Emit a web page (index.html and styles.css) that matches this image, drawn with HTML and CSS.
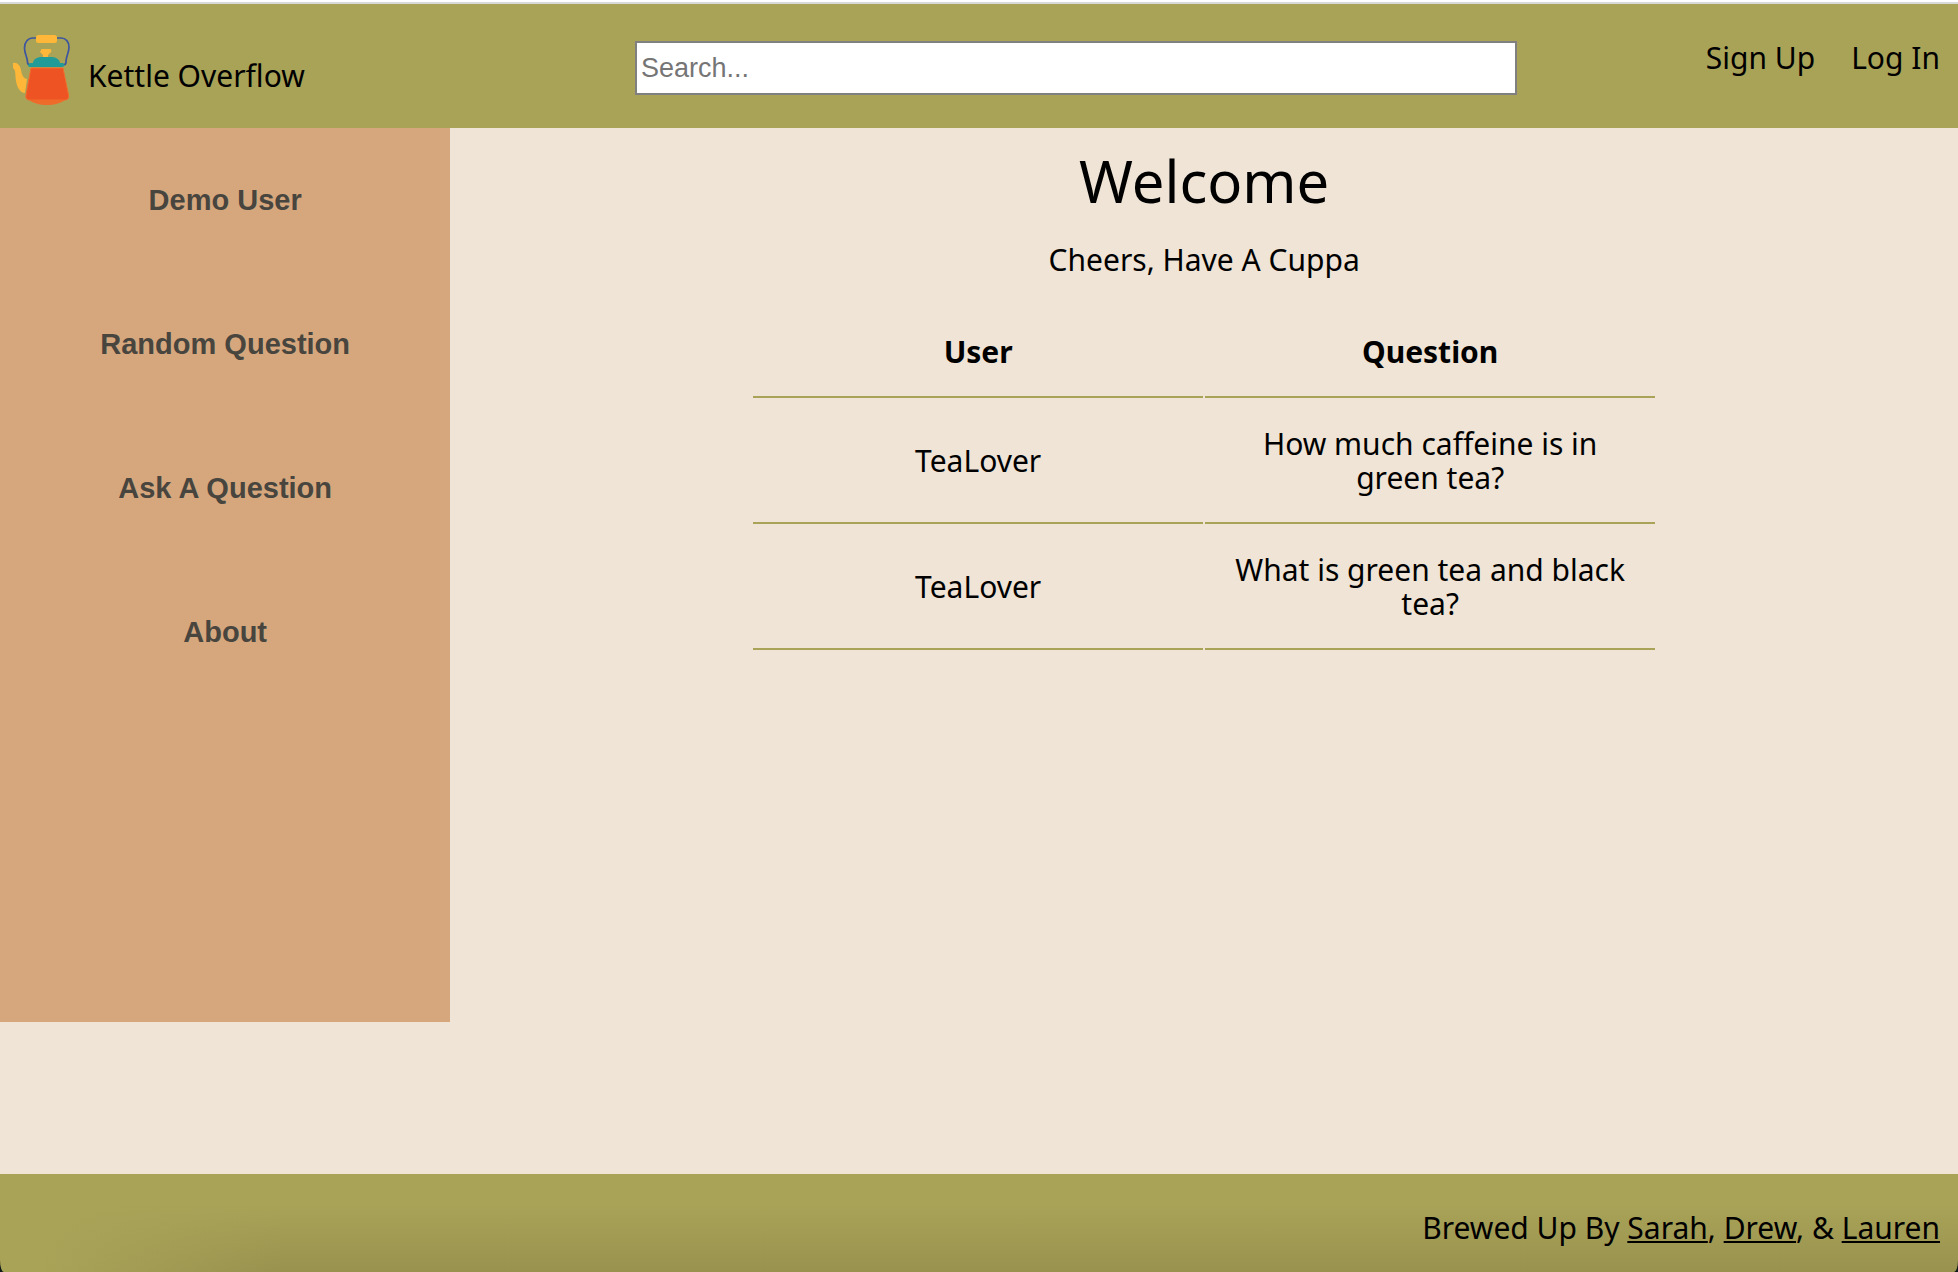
FILE: index.html
```html
<!DOCTYPE html>
<html lang="en">
<head>
  <meta charset="utf-8">
  <meta name="viewport" content="width=device-width, initial-scale=1">
  <title>Kettle Overflow</title>
  <link rel="stylesheet" href="styles.css">
</head>
<body>
  <header class="header">
    <a class="brand" href="#">
      <svg class="brand-logo" viewBox="0 0 60 72" aria-hidden="true">
        <path d="M26 4h-5C16 4 12.500 8 12.500 14c0 6 3 9 3 14q0 3 3 3M45 4h4c5 0 8 4 8 9 0 6-3 9-3 15q0 3-3 3" fill="none" stroke="#3d569f" stroke-width="1.700"/>
        <rect x="24" y="1" width="21" height="8" rx="2.500" fill="#feb738"/>
        <path d="M29 16q0-1 1-1h8q2 0 1 3l-3 3v3h-5v-3l-3-3z" fill="#feb738"/>
        <path d="M21 29c0-4 5-6 8-6h11c4 0 8 3 8 6h3c2 1 2 4-1 4H18c-3 0-2-4 1-4z" fill="#209b98"/>
        <path d="M1 29c4-1 7 2 8 7 1 5 2 8 6 9l-2 14C8 59 5 53 4 47 3 41 4 36 1 34z" fill="#feb738"/>
        <path d="M16 65h38c-4 4-12 6-19 6s-15-2-19-6z" fill="#ee6b2b"/>
        <path d="M19 34h32l5.500 27q1 5-4 5H18q-5 0-4-5z" fill="#ed5323" stroke="#f26c2b" stroke-width="1"/>
      </svg>
      <span>Kettle Overflow</span>
    </a>
    <input class="search" type="search" placeholder="Search..." aria-label="Search">
    <nav class="account">
      <a href="#">Sign Up</a>
      <a href="#">Log In</a>
    </nav>
  </header>

  <div class="page">
    <nav class="sidebar">
      <button type="button">Demo User</button>
      <button type="button">Random Question</button>
      <button type="button">Ask A Question</button>
      <button type="button">About</button>
    </nav>
    <main class="content">
      <h1>Welcome</h1>
      <p>Cheers, Have A Cuppa</p>
      <table class="questions">
        <thead>
          <tr><th scope="col">User</th><th scope="col">Question</th></tr>
        </thead>
        <tbody>
          <tr><td>TeaLover</td><td>How much caffeine is in green tea?</td></tr>
          <tr><td>TeaLover</td><td>What is green tea and black tea?</td></tr>
        </tbody>
      </table>
    </main>
  </div>

  <footer class="footer">
    Brewed Up By <a href="#">Sarah</a>, <a href="#">Drew</a>, &amp; <a href="#">Lauren</a>
  </footer>
</body>
</html>
```
FILE: styles.css
```css
:root {
  --olive: #a9a358;
  --cream: #efe4d6;
  --clay: #d6a77d;
}

* {
  box-sizing: border-box;
}

html {
  background: #101a18;
}

body {
  display: flex;
  flex-direction: column;
  min-height: 100vh;
  margin: 0;
  border-top: 2px solid #fff;
  color: #000;
  font-family: "Noto Sans", sans-serif;
  font-size: 30px;
  line-height: 34px;
}

a {
  color: inherit;
}

.header {
  display: grid;
  grid-template-columns: 72fr 100fr 50fr;
  align-items: start;
  height: 126px;
  border-top: 2px solid #d9d9d9;
  background: var(--olive);
}

.brand {
  display: flex;
  align-items: center;
  gap: 16px;
  padding: 30px 0 0 12px;
  text-decoration: none;
}

.brand span {
  padding-top: 12px;
}

.brand-logo {
  width: 60px;
  height: 72px;
}

.search {
  width: 100%;
  height: 54px;
  margin: 37px 0 0;
  padding: 0 4px;
  border: 2px solid #808080;
  border-radius: 0;
  background: #fff;
  font-family: "Liberation Sans", Arial, sans-serif;
  font-size: 27px;
  appearance: none;
}

.search::placeholder {
  color: #757575;
}

.account {
  display: flex;
  justify-content: flex-end;
  gap: 36px;
  padding: 37px 18px 0 0;
}

.account a {
  text-decoration: none;
}

.page {
  display: flex;
  flex: 1;
  align-items: flex-start;
  background: var(--cream);
}

.sidebar {
  display: flex;
  flex: 0 0 23%;
  flex-direction: column;
  padding-bottom: 318px;
  background: var(--clay);
}

.sidebar button {
  height: 144px;
  padding: 0;
  border: 0;
  background: none;
  color: #48453f;
  font-family: "Liberation Sans", Arial, sans-serif;
  font-size: 29px;
  font-weight: 700;
}

.content {
  display: flex;
  flex: 1;
  flex-direction: column;
  align-items: center;
  padding: 19px 24px 24px;
  text-align: center;
}

.content h1 {
  margin: 0 0 28px;
  font-size: 58px;
  font-weight: 400;
  line-height: 68px;
}

.content p {
  margin: 0 0 29px;
}

.questions {
  border-spacing: 2px;
}

.questions th,
.questions td {
  width: 450px;
  padding: 27px;
  border-bottom: 2px solid var(--olive);
}

.footer {
  padding: 37px 18px 27px;
  border-radius: 0 0 4px 4px / 0 0 12px 12px;
  background:
    linear-gradient(to right, var(--olive) 40px, transparent 280px),
    linear-gradient(var(--olive) 30px, #99924f);
  text-align: right;
}

.footer a {
  text-decoration-thickness: 2px;
  text-underline-offset: 2px;
}
```
